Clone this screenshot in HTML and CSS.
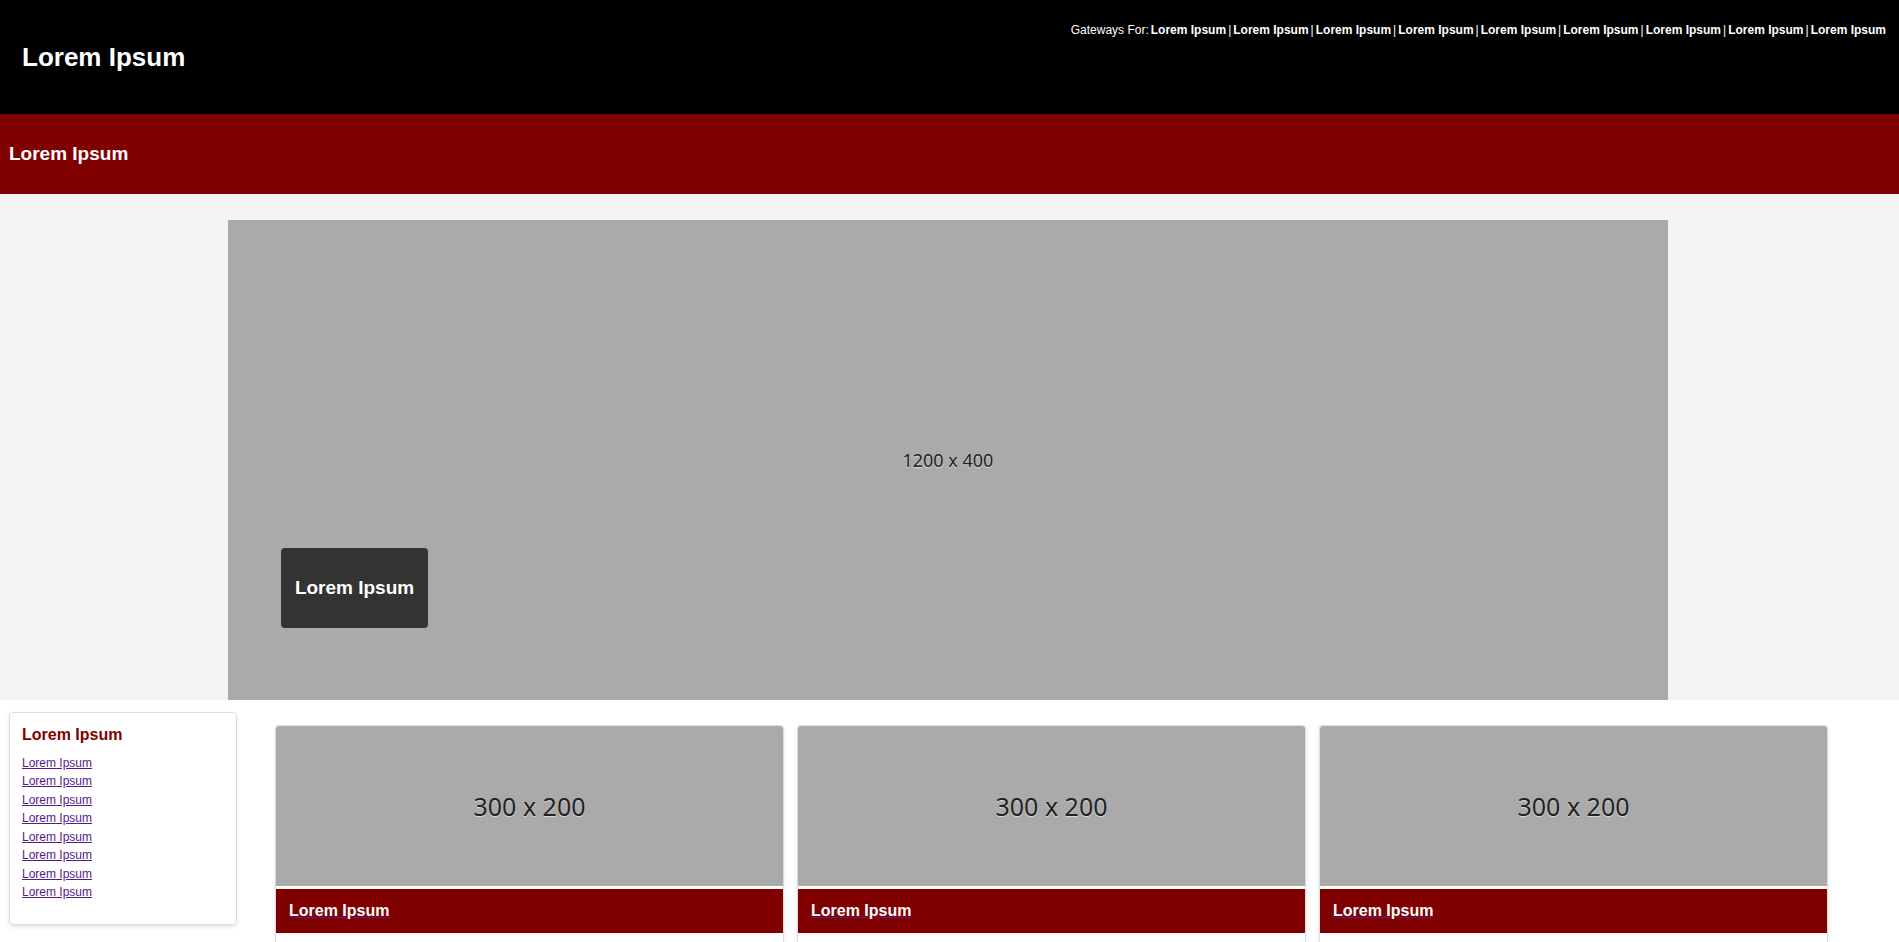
FILE: index.html
```html
<!DOCTYPE html>
<html lang="en">
<head>
<meta charset="utf-8">
<title>Lorem Ipsum</title>
<link rel="stylesheet" href="styles.css">
</head>
<body>
<header class="site-header">
  <h1 class="site-title">Lorem Ipsum</h1>
  <nav class="gateways" aria-label="Gateways">
    <span>Gateways For:</span>
    <a href="#">Lorem Ipsum</a><span>|</span>
    <a href="#">Lorem Ipsum</a><span>|</span>
    <a href="#">Lorem Ipsum</a><span>|</span>
    <a href="#">Lorem Ipsum</a><span>|</span>
    <a href="#">Lorem Ipsum</a><span>|</span>
    <a href="#">Lorem Ipsum</a><span>|</span>
    <a href="#">Lorem Ipsum</a><span>|</span>
    <a href="#">Lorem Ipsum</a><span>|</span>
    <a href="#">Lorem Ipsum</a>
  </nav>
</header>
<div class="section-bar">
  <h2 class="section-title">Lorem Ipsum</h2>
</div>
<section class="hero">
  <div class="hero-image">
    <span class="placeholder-text">1200 x 400</span>
    <div class="hero-caption">
      <h2 class="section-title">Lorem Ipsum</h2>
    </div>
  </div>
</section>
<main class="content">
  <aside class="sidebar">
    <h3 class="sidebar-title">Lorem Ipsum</h3>
    <ul class="sidebar-links">
      <li><a href="#">Lorem Ipsum</a></li>
      <li><a href="#">Lorem Ipsum</a></li>
      <li><a href="#">Lorem Ipsum</a></li>
      <li><a href="#">Lorem Ipsum</a></li>
      <li><a href="#">Lorem Ipsum</a></li>
      <li><a href="#">Lorem Ipsum</a></li>
      <li><a href="#">Lorem Ipsum</a></li>
      <li><a href="#">Lorem Ipsum</a></li>
    </ul>
  </aside>
  <div class="cards">
    <article class="card">
      <div class="card-image"><span class="placeholder-text">300 x 200</span></div>
      <a class="card-link" href="#"><h3 class="card-title"><span>Lorem Ipsum</span></h3></a>
    </article>
    <article class="card">
      <div class="card-image"><span class="placeholder-text">300 x 200</span></div>
      <a class="card-link" href="#"><h3 class="card-title"><span>Lorem Ipsum</span></h3></a>
    </article>
    <article class="card">
      <div class="card-image"><span class="placeholder-text">300 x 200</span></div>
      <a class="card-link" href="#"><h3 class="card-title"><span>Lorem Ipsum</span></h3></a>
    </article>
  </div>
</main>
</body>
</html>
```
FILE: styles.css
```css
* {
  box-sizing: border-box;
}

body {
  display: flex;
  flex-direction: column;
  min-height: 100vh;
  margin: 0;
  background: #fff;
  color: #333;
  font-family: Arial, "Liberation Sans", sans-serif;
  font-size: 12px;
  line-height: 18px;
}

h1,
h2,
h3,
ul {
  margin: 0;
  padding: 0;
}

.site-header {
  display: flex;
  justify-content: space-between;
  align-items: flex-start;
  padding: 21px 13px 37px 22px;
  background: #000;
  color: #fff;
}

.site-title {
  margin-top: 16px;
  font-size: 26px;
  line-height: 40px;
}

.gateways {
  display: flex;
  gap: 2px;
}

.gateways a {
  color: #fff;
  font-weight: bold;
  text-decoration: none;
}

.section-bar {
  padding: 25px 9px;
  background: maroon;
  color: #fff;
}

.section-title {
  font-size: 19px;
  line-height: 30px;
}

.hero {
  padding-top: 26px;
  background: #f4f4f4;
}

.hero-image {
  position: relative;
  display: flex;
  align-items: center;
  justify-content: center;
  max-width: 1440px;
  margin-left: 12%;
  aspect-ratio: 3 / 1;
  background: #aaa;
  font-size: 18px;
}

.placeholder-text {
  color: #222;
  font-family: "Noto Sans", sans-serif;
  text-shadow: 0 1px 1px #ddd;
}

.hero-caption {
  position: absolute;
  bottom: 15%;
  left: 53px;
  padding: 25px 14px;
  border-radius: 4px;
  background: #333;
  color: #fff;
}

.content {
  display: flex;
  flex: 1;
  align-items: stretch;
  gap: 38px;
  padding: 0 71px 0 9px;
}

.sidebar {
  display: flex;
  flex: none;
  flex-direction: column;
  align-self: flex-start;
  width: 228px;
  min-height: 213px;
  margin: 12px 0 16px;
  padding: 9px 12px 23px;
  border: 1px solid #ddd;
  border-radius: 4px;
  box-shadow: 0 2px 4px rgba(0, 0, 0, 0.1);
}

.sidebar-title {
  margin-bottom: 6px;
  color: maroon;
  font-size: 16px;
  line-height: 26px;
}

.sidebar-links {
  display: flex;
  flex: 1;
  flex-direction: column;
  justify-content: space-between;
  list-style: none;
}

.sidebar-links a {
  color: #551a8b;
}

.cards {
  display: grid;
  flex: 1;
  grid-template-columns: repeat(3, 1fr);
  gap: 13px;
  margin-top: 25px;
}

.card {
  overflow: hidden;
  border: 1px solid #ddd;
  border-bottom: 0;
  border-radius: 4px 4px 0 0;
  box-shadow: 0 2px 4px rgba(0, 0, 0, 0.1);
}

.card-image {
  display: flex;
  align-items: center;
  justify-content: center;
  height: 160px;
  margin-bottom: 3px;
  background: #aaa;
  font-size: 25px;
}

.card-link {
  color: #551a8b;
}

.card-title {
  padding: 9px 13px;
  background: maroon;
  font-size: 16px;
  line-height: 26px;
}

.card-title span {
  color: #fff;
}
```
